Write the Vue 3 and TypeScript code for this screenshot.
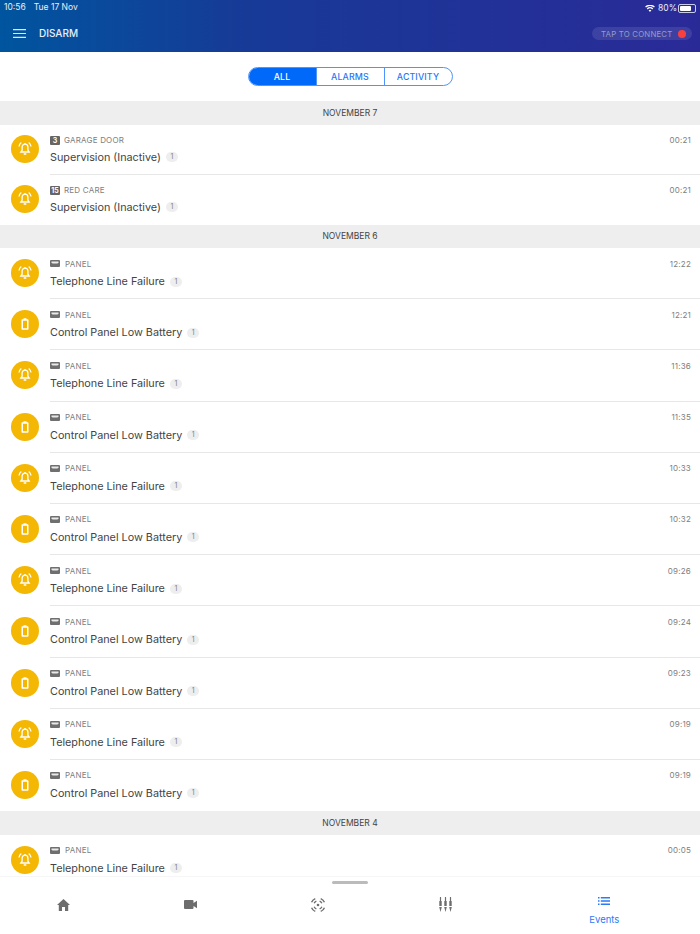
<script setup lang="ts">
type Row = { zone?: string; source: string; title: string; time: string; kind: 'bell' | 'battery' }
type Section = { date: string; compact?: boolean; rows: Row[] }
const tel = 'Telephone Line Failure'
const bat = 'Control Panel Low Battery'
const p = (kind: 'bell' | 'battery', time: string): Row => ({ source: 'PANEL', title: kind === 'bell' ? tel : bat, time, kind })
const sections: Section[] = [
  { date: 'NOVEMBER 7', compact: true, rows: [
    { zone: '3', source: 'GARAGE DOOR', title: 'Supervision (Inactive)', time: '00:21', kind: 'bell' },
    { zone: '15', source: 'RED CARE', title: 'Supervision (Inactive)', time: '00:21', kind: 'bell' },
  ] },
  { date: 'NOVEMBER 6', rows: [
    p('bell', '12:22'), p('battery', '12:21'), p('bell', '11:36'), p('battery', '11:35'), p('bell', '10:33'),
    p('battery', '10:32'), p('bell', '09:26'), p('battery', '09:24'), p('battery', '09:23'), p('bell', '09:19'), p('battery', '09:19'),
  ] },
  { date: 'NOVEMBER 4', rows: [p('bell', '00:05')] },
]
</script>

<template>
  <div class="page">
    <header class="header">
      <div class="status">
        <div class="status-left"><span>10:56</span><span>Tue 17 Nov</span></div>
        <div class="status-right">
          <svg width="10" height="7" viewBox="0 0 11 8"><path d="M5.500 8 3.900 6.100a2.400 2.400 0 0 1 3.200 0zM2.900 5 1.800 3.800a5.600 5.600 0 0 1 7.400 0L8.100 5a3.900 3.900 0 0 0-5.200 0zM.9 2.800 0 1.800a8.200 8.200 0 0 1 11 0l-.9 1a6.900 6.900 0 0 0-9.200 0z" fill="#fff"/></svg>
          <span>80%</span>
          <span class="battery"><span class="battery-fill"></span></span>
        </div>
      </div>
      <div class="bar">
        <div class="bar-left">
          <svg width="13" height="9" viewBox="0 0 13 9"><path d="M0 .6h13M0 4.500h13M0 8.400h13" stroke="#dfe6f5" stroke-width="1.100"/></svg>
          <span class="title">DISARM</span>
        </div>
        <div class="connect"><span>TAP TO CONNECT</span><i class="dot"></i></div>
      </div>
    </header>

    <div class="tabs-wrap">
      <div class="tabs">
        <div class="tab tab-all">ALL</div>
        <div class="tab tab-alarms">ALARMS</div>
        <div class="tab tab-activity">ACTIVITY</div>
      </div>
    </div>

    <main class="list">
      <section v-for="s in sections" :key="s.date">
        <div class="date">{{ s.date }}</div>
        <div v-for="(r, i) in s.rows" :key="i" class="row" :class="{ compact: s.compact }">
          <div class="avatar">
            <svg v-if="r.kind === 'bell'" width="16" height="16" viewBox="0 0 16 16" fill="none" stroke="#fff" stroke-width="1.300">
              <path d="M8 3.200a2.900 2.900 0 0 1 2.900 2.900v3.100l1.300 1.800H3.800l1.300-1.800V6.100A2.900 2.900 0 0 1 8 3.200z" />
              <path d="M6.700 13h2.600" stroke-width="1.500"/>
              <path d="M8 2v1.200M4.300 1.500A6 6 0 0 0 2 5.500M11.700 1.500A6 6 0 0 1 14 5.500" />
            </svg>
            <svg v-else width="16" height="16" viewBox="0 0 16 16">
              <path fill-rule="evenodd" fill="#fff" d="M6.500 2.200h3v1.100h1.300c.4 0 .7.300.7.700v9c0 .4-.3.700-.7.700H5.200c-.4 0-.7-.3-.7-.7V4c0-.4.300-.7.700-.7h1.300zM6 4.800v7.400h4V4.800z"/>
            </svg>
          </div>
          <div class="body">
            <div class="meta">
              <span v-if="r.zone" class="zone">{{ r.zone }}</span>
              <svg v-else class="panel" width="10" height="7" viewBox="0 0 10 7">
                <rect width="10" height="7" rx="1" fill="#6f6f6f"/><path d="M1.500 1.500h7v1l-1 1h-5l-1-1z" fill="#e9e9e9"/>
              </svg>
              <span class="source">{{ r.source }}</span>
              <span class="time">{{ r.time }}</span>
            </div>
            <div class="line">
              <span class="name">{{ r.title }}</span><span class="count">1</span>
            </div>
          </div>
        </div>
      </section>
    </main>

    <nav class="nav">
      <div class="handle"></div>
      <div class="nav-item">
        <svg width="13" height="12" viewBox="0 0 13 12"><path d="M6.500 0 0 6h1.800v6H5V8h3v4h3.200V6H13z" fill="#6d6d6d"/></svg>
      </div>
      <div class="nav-item">
        <svg width="13" height="9" viewBox="0 0 13 9"><path d="M0 1a1 1 0 0 1 1-1h7.500a1 1 0 0 1 1 1v2L13 .8v7.400L9.500 6v2a1 1 0 0 1-1 1H1a1 1 0 0 1-1-1z" fill="#6d6d6d"/></svg>
      </div>
      <div class="nav-item">
        <svg width="16" height="16" viewBox="0 0 16 16" fill="none" stroke="#6d6d6d">
          <circle cx="8" cy="8" r="1.300" fill="#6d6d6d" stroke="none"/>
          <path stroke-width="1.300" d="M4.130 6.360A4.200 4.200 0 0 1 6.360 4.130M9.640 4.130A4.200 4.200 0 0 1 11.870 6.360M11.870 9.640A4.200 4.200 0 0 1 9.640 11.870M6.360 11.870A4.200 4.200 0 0 1 4.130 9.640"/>
          <path stroke-width="1.400" d="M1.560 5.270A7 7 0 0 1 5.270 1.560M10.730 1.560A7 7 0 0 1 14.440 5.270M14.440 10.730A7 7 0 0 1 10.730 14.440M5.270 14.440A7 7 0 0 1 1.560 10.730"/>
        </svg>
      </div>
      <div class="nav-item">
        <svg width="15" height="15" viewBox="0 0 15 15" fill="#6d6d6d">
          <path d="M1.900.5a.6.600 0 0 1 1.200 0V4h.6v5H1.300V4h.6zM1.200 10h2.600L2.500 15z"/>
          <path d="M6.900.5a.6.600 0 0 1 1.200 0V4h.6v5H6.300V4h.6zM6.200 10h2.600L7.500 15z"/>
          <path d="M11.900.5a.6.600 0 0 1 1.200 0V4h.6v5h-2.400V4h.6zM11.200 10h2.600L12.500 15z"/>
        </svg>
      </div>
      <div class="nav-item active">
        <svg width="12" height="8" viewBox="0 0 12 8" fill="#2a7bf6"><path d="M0 0h1.500v1.500H0zM0 3.200h1.500v1.500H0zM0 6.400h1.500V8H0zM2.800 0H12v1.500H2.800zM2.800 3.200H12v1.500H2.800zM2.800 6.400H12V8H2.800z"/></svg>
        <span>Events</span>
      </div>
    </nav>
  </div>
</template>

<style>
html, body { margin: 0; background: #fff; }
</style>

<style scoped>
.page { width: 700px; height: 934px; position: relative; overflow: hidden; font-family: Inter, Roboto, "Liberation Sans", sans-serif; background: #fff; color: #333; }
.header { height: 52px; background: linear-gradient(90deg, #00559f 0%, #173a97 35%, #2a2a97 100%); color: #fff; box-sizing: border-box; }
.status { height: 14px; padding: 1px 4px 0; display: flex; justify-content: space-between; font-size: 8.500px; line-height: 12px; color: #e8eefa; }
.status-left { display: flex; gap: 8px; }
.status-right { display: flex; align-items: center; gap: 3px; }
.battery { display: inline-flex; height: 5px; width: 14px; border: 1px solid #c8cdea; border-radius: 2px; padding: 1px; box-sizing: content-box; margin-left: -2px; }
.battery-fill { display: block; width: 80%; background: #fff; border-radius: 1px; }
.bar { height: 36px; display: flex; align-items: center; justify-content: space-between; padding: 0 8px 0 13px; }
.bar-left { display: flex; align-items: center; gap: 13px; }
.title { font-size: 10px; font-weight: 500; color: #e9eef8; }
.connect { height: 13px; width: 100px; margin-top: 1px; background: rgba(255,255,255,.1); border-radius: 7px; display: flex; align-items: center; justify-content: space-between; padding: 0 6px 0 9px; box-sizing: border-box; font-size: 7.800px; color: #959bcc; letter-spacing: .2px; }
.dot { width: 8px; height: 8px; border-radius: 50%; background: #f9403f; }
.tabs-wrap { height: 49px; display: flex; justify-content: center; align-items: center; }
.tabs { display: flex; width: 205px; height: 19px; border: 1px solid #4d94ff; border-radius: 10px; box-sizing: border-box; overflow: hidden; }
.tab { display: flex; align-items: center; justify-content: center; font-size: 8.800px; font-weight: 500; color: #1f78f5; letter-spacing: .15px; }
.tab-all { width: 67px; background: #0069fa; color: #fff; }
.tab-alarms { width: 69px; border-left: 1px solid #4d94ff; border-right: 1px solid #4d94ff; box-sizing: border-box; }
.tab-activity { flex: 1; }
.date { height: 23.500px; background: #eeeeee; display: flex; align-items: center; justify-content: center; font-size: 8.500px; color: #444; }
.row { height: 51.200px; display: flex; box-sizing: border-box; }
.row.compact { height: 50px; }
.avatar { width: 28px; height: 28px; border-radius: 50%; background: #f3b704; margin: 11px 11px 0 11px; flex: none; display: flex; align-items: center; justify-content: center; }
.compact .avatar { margin-top: 10px; }
.body { flex: 1; border-bottom: 1px solid #e7e7e7; padding-right: 9px; padding-top: 10px; box-sizing: border-box; }
section .row:last-child .body { border-bottom: none; }
.meta { display: flex; align-items: center; height: 11px; font-size: 8px; color: #808080; letter-spacing: .2px; }
.zone { background: #666; color: #fff; font-size: 7px; font-weight: 700; min-width: 10px; height: 9px; line-height: 9px; text-align: center; padding: 0 1px; box-sizing: border-box; margin-right: 4px; border-radius: 1px; letter-spacing: 0; }
.panel { margin-right: 5px; }
.time { margin-left: auto; font-size: 8px; color: #808080; }
.line { display: flex; align-items: center; margin-top: 5px; height: 15px; }
.compact .line { margin-top: 4px; }
.name { font-size: 10.800px; color: #444; }
.count { margin-left: 5px; min-width: 12px; height: 10px; padding: 0 3px; box-sizing: border-box; border-radius: 5px; background: #eee; color: #808080; font-size: 7px; line-height: 10px; text-align: center; }
.nav { position: absolute; left: 0; right: 0; bottom: 0; height: 57px; background: #fff; border-top: 1px solid #f6f6f6; display: grid; grid-template-columns: repeat(4, 127.200px) 1fr; }
.handle { position: absolute; left: 332px; top: 4px; width: 36px; height: 3px; border-radius: 2px; background: #bbb; }
.nav-item { display: flex; flex-direction: column; align-items: center; padding-top: 22px; box-sizing: border-box; }
.nav-item:nth-child(3) { padding-top: 23px; }
.nav-item:nth-child(4) { padding-top: 20px; }
.nav-item:nth-child(5) { padding-top: 20px; }
.nav-item:nth-child(6) { padding-top: 20px; }
.active { color: #2a7bf6; font-size: 9.500px; gap: 9px; }
</style>
